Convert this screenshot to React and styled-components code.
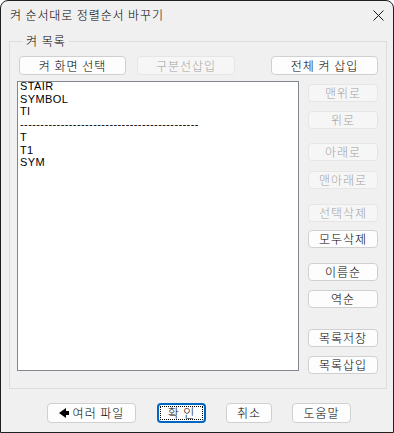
import React from "react";
import styled, { createGlobalStyle } from "styled-components";

const color = {
  face: "#f0f0f0",
  frame: "#1f1f1f",
  text: "#000000",
  disabled: "#a3a3a3",
  btnBorder: "#d0d0d0",
  btnFace: "#fdfdfd",
  groupLine: "#dcdcdc",
  listBorder: "#828790",
  accent: "#0067c0",
};

const GlobalStyle = createGlobalStyle`
  html, body {
    margin: 0;
    padding: 0;
    background: #ffffff;
  }
  * {
    box-sizing: border-box;
  }
`;

const Window = styled.div`
  width: 394px;
  height: 433px;
  display: flex;
  flex-direction: column;
  background-color: ${color.face};
  border: 1px solid ${color.frame};
  border-radius: 8px 8px 0 0;
  overflow: hidden;
  font-family: "Noto Sans CJK KR", "Liberation Sans", sans-serif;
  font-size: 12px;
  font-weight: 300;
  color: ${color.text};
`;

const TitleBar = styled.div`
  height: 27px;
  display: flex;
  align-items: center;
  justify-content: space-between;
  padding: 0 8px 0 9px;
  flex-shrink: 0;
`;

const Title = styled.div`
  font-size: 12px;
  line-height: 14px;
  letter-spacing: 0.9px;
  padding-top: 1px;
`;

const CloseButton = styled.div`
  display: flex;
  align-items: center;
  justify-content: center;
  width: 14px;
  height: 14px;
  margin-top: 1px;
`;

const Group = styled.fieldset`
  margin: 6px 0 0 8px;
  width: 378px;
  min-width: 0;
  padding: 0 8px 14px 7px;
  border: 1px solid ${color.groupLine};
  border-radius: 0;
`;

const Legend = styled.legend`
  margin-left: 6px;
  padding: 0 3px;
  font-size: 12px;
  line-height: 14px;
  letter-spacing: 1px;
`;

const TopRow = styled.div`
  display: flex;
  align-items: center;
  margin-top: 8px;
  height: 19px;
`;

const Button = styled.div`
  display: flex;
  align-items: center;
  justify-content: center;
  width: ${(p) => p.w}px;
  height: ${(p) => p.h || 18}px;
  margin-left: ${(p) => (p.ml === "auto" ? "auto" : `${p.ml || 0}px`)};
  margin-top: ${(p) => p.mt || 0}px;
  background-color: ${(p) => (p.disabled ? "#f6f6f6" : color.btnFace)};
  border: 1px solid ${(p) => (p.disabled ? "#e6e6e6" : color.btnBorder)};
  border-radius: 4px;
  color: ${(p) => (p.disabled ? color.disabled : color.text)};
  font-size: 12px;
  line-height: 14px;
  letter-spacing: 1px;
  white-space: pre;
  flex-shrink: 0;
  gap: 4px;
`;

const DefaultButton = styled(Button)`
  position: relative;
  border: 2px solid ${color.accent};
  &::after {
    content: "";
    position: absolute;
    inset: 1px;
    border: 1px dotted #000000;
    border-radius: 1px;
  }
`;

const Main = styled.div`
  display: flex;
  margin-top: 6px;
  gap: 9px;
`;

const ListBox = styled.div`
  width: 282px;
  height: 290px;
  background-color: #ffffff;
  border: 1px solid ${color.listBorder};
  padding: 0 2px;
  font-family: "Liberation Sans", Arial, sans-serif;
  font-weight: 400;
  font-size: 11px;
  line-height: 12.7px;
  letter-spacing: 0.4px;
  overflow: hidden;
`;

const ListItem = styled.div`
  white-space: pre;
  &:first-child {
    margin-top: -2px;
  }
`;

const SideColumn = styled.div`
  display: flex;
  flex-direction: column;
  width: 70px;
`;

const BottomRow = styled.div`
  display: flex;
  align-items: center;
  margin-top: 14px;
  padding-left: 46px;
`;

const items = [
  "STAIR",
  "SYMBOL",
  "TI",
  "-".repeat(44),
  "T",
  "T1",
  "SYM",
];

const sideButtons = [
  { label: "맨위로", mt: 3, disabled: true },
  { label: "위로", mt: 9, disabled: true },
  { label: "아래로", mt: 14, disabled: true },
  { label: "맨아래로", mt: 10, disabled: true },
  { label: "선택삭제", mt: 15, disabled: true },
  { label: "모두삭제", mt: 8 },
  { label: "이름순", mt: 15 },
  { label: "역순", mt: 9 },
  { label: "목록저장", mt: 21 },
  { label: "목록삽입", mt: 9 },
];

const App = () => {
  return (
    <>
      <GlobalStyle />
      <Window>
        <TitleBar>
          <Title>켜 순서대로 정렬순서 바꾸기</Title>
          <CloseButton>
            <svg width="11" height="11" viewBox="0 0 11 11">
              <path d="M0.5 0.5 L10.5 10.5 M10.5 0.5 L0.5 10.5" stroke="#1a1a1a" strokeWidth="1" />
            </svg>
          </CloseButton>
        </TitleBar>
        <Group>
          <Legend>켜 목록</Legend>
          <TopRow>
            <Button w={107} h={19} ml={2}>켜 화면 선택</Button>
            <Button w={98} h={19} ml={11} disabled>구분선삽입</Button>
            <Button w={107} h={19} ml="auto">전체 켜 삽입</Button>
          </TopRow>
          <Main>
            <ListBox>
              {items.map((it, i) => (
                <ListItem key={i}>{it}</ListItem>
              ))}
            </ListBox>
            <SideColumn>
              {sideButtons.map((b) => (
                <Button key={b.label} w={70} mt={b.mt} disabled={b.disabled}>
                  {b.label}
                </Button>
              ))}
            </SideColumn>
          </Main>
        </Group>
        <BottomRow>
          <Button w={89} h={20}>
            <svg width="10" height="10" viewBox="0 0 10 10">
              <polygon points="0,5 7,0 7,10" fill="#000" />
              <rect x="7" y="3" width="3" height="4" fill="#000" />
            </svg>
            여러 파일
          </Button>
          <DefaultButton w={49} h={20} ml={21}>확 인</DefaultButton>
          <Button w={46} h={20} ml={20}>취소</Button>
          <Button w={59} h={20} ml={20}>도움말</Button>
        </BottomRow>
      </Window>
    </>
  );
};

export default App;
